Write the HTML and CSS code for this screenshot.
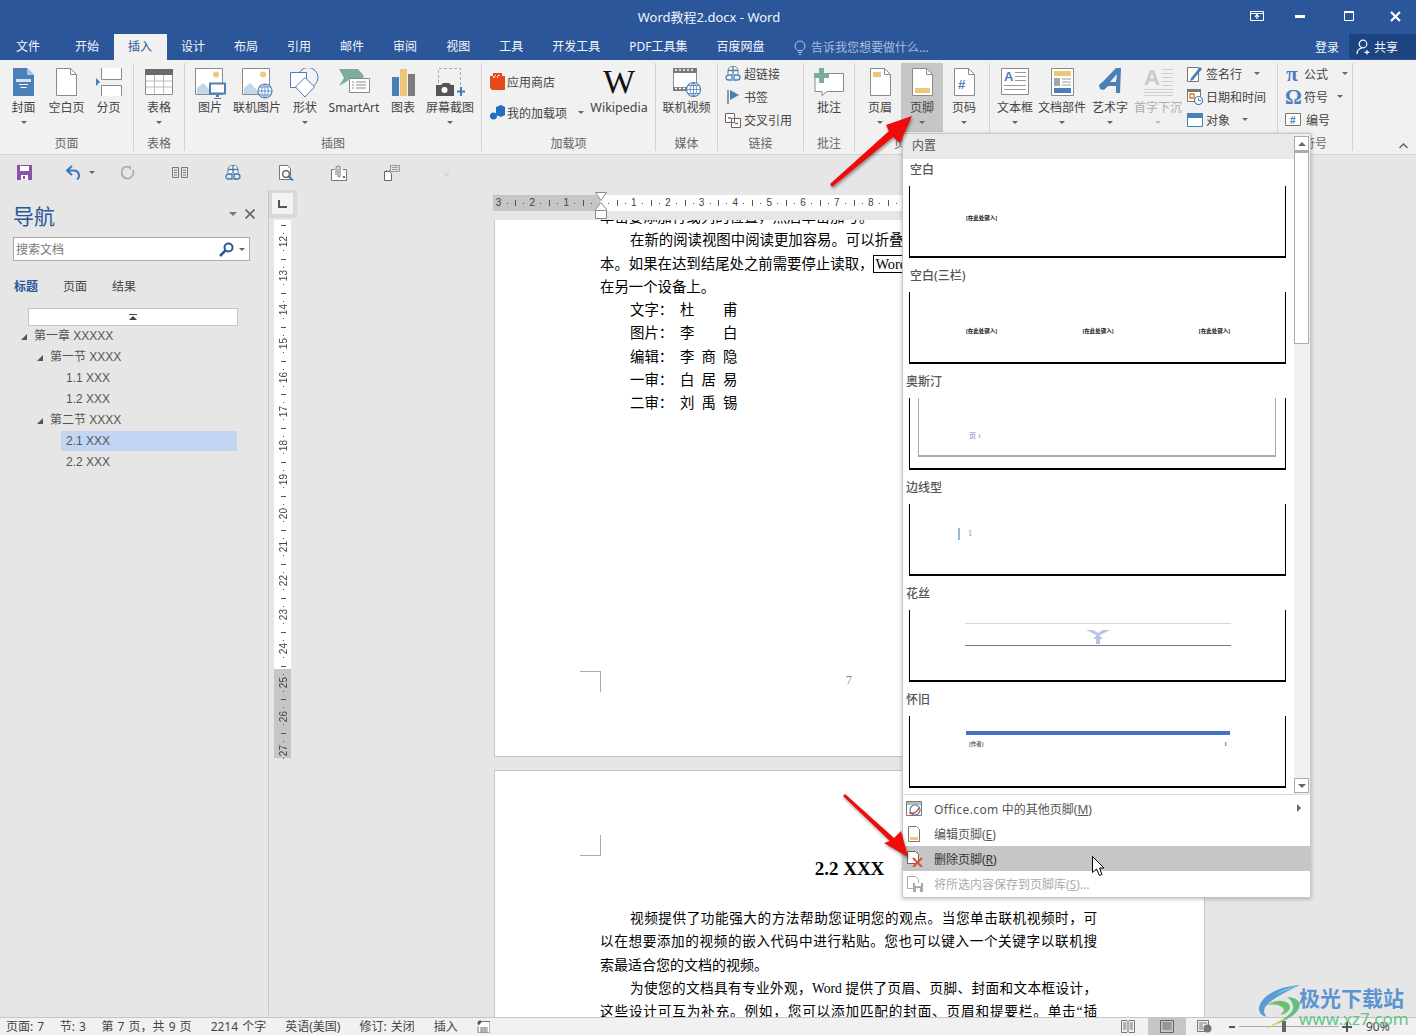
FILE: index.html
```html
<!DOCTYPE html>
<html lang="zh-CN">
<head>
<meta charset="utf-8">
<title>Word教程2.docx - Word</title>
<link rel="stylesheet" href="styles.css">
</head>
<body>
<div class="app">
  <header class="titlebar">
    <div class="title">Word教程2.docx - Word</div>
    <div class="winbtns">
      <svg class="wb" width="14" height="12" viewBox="0 0 14 12"><path d="M.5 1.5h13v9H.5zM.5 3.5h13" fill="none" stroke="#fff"/><path d="M7 9V5M5 7l2-2.500 2 2.500" fill="none" stroke="#fff" stroke-width="1.200"/></svg>
      <svg class="wb" width="10" height="3" viewBox="0 0 10 3"><path d="M0 0h10v3H0z" fill="#fff"/></svg>
      <svg class="wb" width="10" height="10" viewBox="0 0 10 10"><path d="M.5 1.500h9v8h-9z" fill="none" stroke="#fff"/><path d="M0 0h10v2H0z" fill="#fff"/></svg>
      <svg class="wb" width="11" height="11" viewBox="0 0 11 11"><path d="M1 1l9 9M10 1l-9 9" stroke="#fff" stroke-width="2.200"/></svg>
    </div>
  </header>
  <nav class="tabs">
    <span class="tab tab-file">文件</span>
    <span class="tab">开始</span>
    <span class="tab tab-on">插入</span>
    <span class="tab">设计</span>
    <span class="tab">布局</span>
    <span class="tab">引用</span>
    <span class="tab">邮件</span>
    <span class="tab">审阅</span>
    <span class="tab">视图</span>
    <span class="tab">工具</span>
    <span class="tab">开发工具</span>
    <span class="tab">PDF工具集</span>
    <span class="tab">百度网盘</span>
    <span class="tell">
      <svg width="12" height="15" viewBox="0 0 12 15"><path d="M3.500 10.500C2 9 1 7.800 1 6a5 5 0 0 1 10 0c0 1.800-1 3-2.500 4.500zM4 12.500h4M5 14.500h2" fill="none" stroke="#b5c7e0"/></svg>
      告诉我您想要做什么...
    </span>
    <span class="login">登录</span>
    <span class="share">
      <svg width="16" height="16" viewBox="0 0 16 16"><circle cx="7" cy="5" r="3.800" fill="none" stroke="#fff" stroke-width="1.200"/><path d="M1 15c0-3.500 2.500-5.500 5-6M11 11v4.500M8.500 13.300h5" fill="none" stroke="#fff" stroke-width="1.200"/></svg>
      共享
    </span>
  </nav>

  <section class="ribbon">
    <div class="grp g1">
      <div class="gbody">
        <div class="lg w43"><svg class="ic" width="21" height="28" viewBox="0 0 21 28"><path d="M0 0h14l7 7v21H0z" fill="#4a80b8"/><path d="M14 0l7 7h-7z" fill="#a9c4e0"/><path d="M3 11h15v3H3z" fill="#d7e3f0"/><path d="M6 16.500h9M7.500 19.500h6" stroke="#fff"/></svg><span class="lb">封面</span><i class="caret"></i></div>
        <div class="lg w43"><svg class="ic" width="21" height="28" viewBox="0 0 21 28"><path d="M.5.500h14l6 6v21H.5z" fill="#fff" stroke="#8a8a8a"/><path d="M14.500.5v6h6" fill="none" stroke="#8a8a8a"/></svg><span class="lb">空白页</span></div>
        <div class="lg w41"><svg class="ic" width="26" height="28" viewBox="0 0 26 28"><path d="M5.500 0v11.500h20V0M5.500 28V17.500h20V28" fill="#fff" stroke="#8a8a8a"/><path d="M0 10l4 4-4 4z" fill="#4a80b8"/></svg><span class="lb">分页</span></div>
      </div>
      <div class="glabel">页面</div>
    </div>
    <div class="grp g2">
      <div class="gbody">
        <div class="lg w50"><svg class="ic ic-d1" width="28" height="26" viewBox="0 0 28 26"><path d="M.5.500h27v25H.500z" fill="#fff" stroke="#8a8a8a"/><path d="M0 0h28v6H0z" fill="#6a6a6a"/><path d="M1 12h26M1 18h26M9.500 6v19M18.500 6v19" stroke="#bdbdbd"/></svg><span class="lb">表格</span><i class="caret"></i></div>
      </div>
      <div class="glabel">表格</div>
    </div>
    <div class="grp g3">
      <div class="gbody">
        <div class="lg w44"><svg class="ic" width="31" height="32" viewBox="0 0 31 32"><path d="M.5.500h27v26H.500z" fill="#fff" stroke="#8a8a8a"/><circle cx="21" cy="6.500" r="3" fill="#f0c878"/><path d="M2 26V20l6-5 6 6 3 5z" fill="#c5d6ea"/><path d="M14 14.500h17v12H14z" fill="#4a80b8"/><path d="M16 16.500h13v8H16z" fill="#fff"/><path d="M21 27h3v2h-3zM19 30h7v1h-7z" fill="#4a80b8"/></svg><span class="lb">图片</span></div>
        <div class="lg w50"><svg class="ic" width="31" height="31" viewBox="0 0 31 31"><path d="M.5.500h27v26H.500z" fill="#fff" stroke="#8a8a8a"/><circle cx="21" cy="6.500" r="3" fill="#f0c878"/><path d="M2 26V20l6-5 6 6 3 5z" fill="#c5d6ea"/><circle cx="23" cy="23" r="7" fill="#fff" stroke="#4a80b8" stroke-width="1.200"/><path d="M16 23h14M23 16v14M17.500 19h11M17.500 27h11M23 16c-4.500 4-4.500 10 0 14M23 16c4.500 4 4.500 10 0 14" fill="none" stroke="#4a80b8" stroke-width=".8"/></svg><span class="lb">联机图片</span></div>
        <div class="lg w46"><svg class="ic" width="30" height="30" viewBox="0 0 30 30"><circle cx="18" cy="9.500" r="10" fill="none" stroke="#4a80b8"/><path d="M.5 4.500h16v15H.500z" fill="#fff" stroke="#4a80b8"/><path d="M15 9.500l9.500 9.500-9.500 10-9.500-10z" fill="#fff" stroke="#4a80b8"/></svg><span class="lb">形状</span><i class="caret"></i></div>
        <div class="lg w52"><svg class="ic ic-d1" width="31" height="26" viewBox="0 0 31 26"><path d="M0 0h19l6 7-2 3H9L10 11 0 17l5-8z" fill="#7aad9c"/><path d="M10.500 9.500h20v14h-20z" fill="#fff" stroke="#8a8a8a"/><path d="M13 13h2M13 16h2M13 19h2M17 13h10M17 16h10M17 19h10" stroke="#8a8a8a"/></svg><span class="lb">SmartArt</span></div>
        <div class="lg w46"><svg class="ic ic-d1" width="23" height="27" viewBox="0 0 23 27"><path d="M0 8h7v19H0z" fill="#4a80b8"/><path d="M8 0h7v27H8z" fill="#eec67a"/><path d="M16 5h7v22h-7z" fill="#7d7d7d"/></svg><span class="lb">图表</span></div>
        <div class="lg w48"><svg class="ic" width="29" height="28" viewBox="0 0 29 28"><path d="M2.500 15V.5h22v20" fill="none" stroke="#a9a9a9" stroke-dasharray="3 2"/><path d="M0 17h5l2-2h6l2 2h3v11H0z" fill="#555"/><circle cx="8.500" cy="22" r="3" fill="#fff"/><path d="M25 19v9M21 23.500h8" stroke="#3f7fbf" stroke-width="2"/></svg><span class="lb">屏幕截图</span><i class="caret"></i></div>
      </div>
      <div class="glabel">插图</div>
    </div>
    <div class="grp g4">
      <div class="gbody addins">
        <div class="addcol">
          <div class="sm tall"><svg width="15" height="17" viewBox="0 0 15 17"><path d="M0 3h15v14H2L0 15z" fill="#e8491b"/><path d="M3 0h9v5h-2V2H8v3H6V2H5v3H3z" fill="#e8491b"/><path d="M3 3h2v2H3zM7 3h1v2H7z" fill="#fff" opacity=".7"/></svg><span>应用商店</span></div>
          <div class="sm tall"><svg width="15" height="15" viewBox="0 0 15 15"><path d="M6 2l5-2 4 2v8l-4 2-5-2z" fill="#1f70c1"/><circle cx="3.500" cy="11" r="3.500" fill="#1f70c1"/></svg><span>我的加载项</span><i class="caret inl"></i></div>
        </div>
        <div class="lg w58"><span class="wlogo">W</span><span class="lb wikilb">Wikipedia</span></div>
      </div>
      <div class="glabel">加载项</div>
    </div>
    <div class="grp g5">
      <div class="gbody">
        <div class="lg w61"><svg class="ic" width="28" height="29" viewBox="0 0 28 29"><path d="M.5.500h23v22H.5z" fill="#fff" stroke="#8a8a8a"/><path d="M0 0h24v5H0zM0 19h24v4H0z" fill="#7a7a7a"/><path d="M2 2h2M6 2h2M10 2h2M14 2h2M18 2h2M2 20.500h2M6 20.500h2M10 20.500h2" stroke="#fff" stroke-width="1.500"/><circle cx="20.500" cy="21.500" r="7" fill="#fff" stroke="#4a80b8" stroke-width="1.200"/><path d="M13.500 21.500h14M20.500 14.500v14M15 17.500h11M15 25.500h11M20.500 14.500c-4.500 4-4.500 10 0 14M20.500 14.500c4.500 4 4.500 10 0 14" fill="none" stroke="#4a80b8" stroke-width=".8"/></svg><span class="lb">联机视频</span></div>
      </div>
      <div class="glabel">媒体</div>
    </div>
    <div class="grp g6">
      <div class="gbody smcol">
        <div class="sm"><svg width="16" height="16" viewBox="0 0 16 16"><path d="M3 8V5a5 5 0 0 1 10 0v3" fill="#fff" stroke="#777"/><path d="M3 4.500h10M8 0v8M1 11.500a2.500 2.500 0 0 1 2.500-2.500H7v5H3.500A2.500 2.500 0 0 1 1 11.500zM15 11.500A2.500 2.500 0 0 0 12.500 9H9v5h3.500a2.500 2.500 0 0 0 2.500-2.500z" fill="none" stroke="#4a80b8" stroke-width="1.300"/></svg><span>超链接</span></div>
        <div class="sm"><svg width="16" height="16" viewBox="0 0 16 16"><path d="M3 1v14" stroke="#777" stroke-width="1.500"/><path d="M5 1l9 5-9 5z" fill="#4a80b8"/></svg><span>书签</span></div>
        <div class="sm"><svg width="16" height="16" viewBox="0 0 16 16"><path d="M.5 1.500h9v9h-9zM6.500 6.500h9v9h-9z" fill="#fff" stroke="#666"/><path d="M3 6h3M10 11.500h3" stroke="#d9512c" stroke-width="1.500"/></svg><span>交叉引用</span></div>
      </div>
      <div class="glabel">链接</div>
    </div>
    <div class="grp g7">
      <div class="gbody">
        <div class="lg w50"><svg class="ic" width="30" height="28" viewBox="0 0 30 28"><path d="M4.500 5.500h25v18H13l-5 4v-4H1V9z" fill="#fff" stroke="#8a8a8a"/><path d="M5 0h5v5h5v5h-5v5H5v-5H0V5h5z" fill="#7aad9c"/></svg><span class="lb">批注</span></div>
      </div>
      <div class="glabel">批注</div>
    </div>
    <div class="grp g8">
      <div class="gbody">
        <div class="lg w42"><svg class="ic" width="21" height="28" viewBox="0 0 21 28"><path d="M.5.500h14l6 6v21H.5z" fill="#fff" stroke="#8a8a8a"/><path d="M14.500.5v6h6" fill="none" stroke="#8a8a8a"/><path d="M3 4h8v5H3z" fill="#eec67a"/></svg><span class="lb">页眉</span><i class="caret"></i></div>
        <div class="lg w42 lg-on"><svg class="ic" width="21" height="28" viewBox="0 0 21 28"><path d="M.5.500h14l6 6v21H.5z" fill="#fff" stroke="#8a8a8a"/><path d="M14.500.5v6h6" fill="none" stroke="#8a8a8a"/><path d="M3 20h15v5H3z" fill="#eec67a"/></svg><span class="lb">页脚</span><i class="caret"></i></div>
        <div class="lg w42"><svg class="ic" width="21" height="28" viewBox="0 0 21 28"><path d="M.5.500h14l6 6v21H.5z" fill="#fff" stroke="#8a8a8a"/><path d="M14.500.5v6h6" fill="none" stroke="#8a8a8a"/><text x="4" y="21" class="hash">#</text></svg><span class="lb">页码</span><i class="caret"></i></div>
      </div>
      <div class="glabel">页眉和页脚</div>
    </div>
    <div class="grp g9">
      <div class="gbody">
        <div class="lg w46"><svg class="ic" width="28" height="27" viewBox="0 0 28 27"><path d="M.5.500h27v26H.5z" fill="#fff" stroke="#8a8a8a"/><text x="3" y="13" class="aicon">A</text><path d="M14 4.500h11M14 8.500h11M14 12.500h11M3 17.500h22M3 21.500h22" stroke="#9a9a9a"/></svg><span class="lb">文本框</span><i class="caret"></i></div>
        <div class="lg w48"><svg class="ic" width="23" height="28" viewBox="0 0 23 28"><path d="M.5.500h22v27H.5z" fill="#fff" stroke="#8a8a8a"/><path d="M3 3h17v5H3z" fill="#eec67a"/><path d="M3 10h6v8H3z" fill="#a6a6a6"/><path d="M11 11h9M11 14h9M11 17h9" stroke="#9a9a9a"/><path d="M3 20h17v5H3z" fill="#4a80b8"/></svg><span class="lb">文档部件</span><i class="caret"></i></div>
        <div class="lg w48"><svg class="ic" width="22" height="26" viewBox="0 0 22 26"><path d="M0 17C6 12 12 5 17 0h5l-1 25h-4l0-7H9l-4 4-4-1zM11 14h6l1-8z" fill="#4a80b8" fill-rule="evenodd"/></svg><span class="lb">艺术字</span><i class="caret"></i></div>
        <div class="lg w47 off"><svg class="ic" width="29" height="29" viewBox="0 0 29 29"><text x="0" y="17" class="aicon2">A</text><path d="M18 1.500h11M18 5.500h11M18 9.500h11M18 13.500h11M18 17.500h11M0 21.500h29M0 24.500h29M0 27.500h29" stroke="#cfcfcf"/></svg><span class="lb">首字下沉</span><i class="caret"></i></div>
        <div class="smcol c-sign">
          <div class="sm"><svg width="16" height="16" viewBox="0 0 16 16"><path d="M.5 1.500h11v14H.5z" fill="#fff" stroke="#777"/><path d="M4 12L13 1l2 2-9 11-3 1z" fill="#4a80b8"/></svg><span>签名行</span><i class="caret inl"></i></div>
          <div class="sm"><svg width="16" height="16" viewBox="0 0 16 16"><path d="M.5.500h13v12H.5z" fill="#fff" stroke="#777"/><path d="M0 0h14v3H0z" fill="#777"/><path d="M3 5h4v4H3z" fill="none" stroke="#e0761c" stroke-width="1.300"/><circle cx="11.500" cy="11.500" r="4" fill="#fff" stroke="#4a80b8" stroke-width="1.200"/><path d="M11.500 9v2.500H14" fill="none" stroke="#4a80b8"/></svg><span>日期和时间</span></div>
          <div class="sm"><svg width="16" height="16" viewBox="0 0 16 16"><path d="M.5 1.500h15v13H.5z" fill="#fff" stroke="#4a80b8"/><path d="M0 1h16v5H0z" fill="#4a80b8"/></svg><span>对象</span><i class="caret inl"></i></div>
        </div>
      </div>
      <div class="glabel">文本</div>
    </div>
    <div class="grp g10">
      <div class="gbody smcol c-sym">
        <div class="sm"><span class="sym">π</span><span>公式</span><i class="caret inl"></i></div>
        <div class="sm"><span class="sym">Ω</span><span>符号</span><i class="caret inl tight"></i></div>
        <div class="sm"><svg width="16" height="14" viewBox="0 0 16 14"><path d="M.5.500h15v12H.5z" fill="#fff" stroke="#777"/><text x="5" y="10.500" class="hash2">#</text></svg><span>编号</span></div>
      </div>
      <div class="glabel">符号</div>
    </div>
    <svg class="collapse" width="9" height="6" viewBox="0 0 9 6"><path d="M.5 5L4.500 1l4 4" fill="none" stroke="#666" stroke-width="1.500"/></svg>
  </section>

  <div class="qat">
    <svg width="15" height="15" viewBox="0 0 15 15"><path d="M0 0h15v15H0z" fill="#8a52a8"/><path d="M3 1h9v5H3z" fill="#fff"/><path d="M4 10h7v5H4z" fill="#fff"/><path d="M6 11h2v3H6z" fill="#8a52a8"/></svg>
    <svg class="q-undo" width="15" height="15" viewBox="0 0 15 15"><path d="M6 1L1 5.500 6 10" fill="none" stroke="#3f78b5" stroke-width="2"/><path d="M2 5.500h6a5 5 0 0 1 3 9" fill="none" stroke="#3f78b5" stroke-width="2"/></svg>
    <i class="caret q-caret"></i>
    <svg class="q-redo" width="14" height="14" viewBox="0 0 14 14"><path d="M9 1a6 6 0 1 0 3 3" fill="none" stroke="#b0b0b0" stroke-width="2"/><path d="M6.500 0h3.500v4.500z" fill="#b0b0b0"/></svg>
    <svg class="q-col" width="16" height="11" viewBox="0 0 16 11"><path d="M.5.500h6v10h-6zM9.500.5h6v10h-6zM2 3h3M2 5.500h3M2 8h3M11 3h3M11 5.500h3M11 8h3" fill="none" stroke="#777"/></svg>
    <svg class="q-web" width="16" height="16" viewBox="0 0 16 16"><path d="M3 8V5a5 5 0 0 1 10 0v3" fill="#fff" stroke="#777"/><path d="M3 4.500h10M8 0v8M1 11.500a2.500 2.500 0 0 1 2.500-2.500H7v5H3.500A2.500 2.500 0 0 1 1 11.500zM15 11.500A2.500 2.500 0 0 0 12.500 9H9v5h3.500a2.500 2.500 0 0 0 2.500-2.500z" fill="none" stroke="#3f78b5" stroke-width="1.300"/></svg>
    <svg class="q-find" width="15" height="16" viewBox="0 0 15 16"><path d="M.5.500h8l3 3v11H.5z" fill="#fff" stroke="#777"/><circle cx="7" cy="9" r="3.300" fill="#fff" stroke="#555" stroke-width="1.200"/><path d="M9.500 11.500L14 15.500" stroke="#3f78b5" stroke-width="1.800"/></svg>
    <svg class="q-clip" width="16" height="16" viewBox="0 0 16 16"><path d="M.5 4.500h3M12 4.500h3.500v11H.5v-11" fill="#fff" stroke="#777"/><path d="M5 10V3a2 2 0 0 1 4 0v8a1 1 0 0 1-2 0V4" fill="none" stroke="#777"/><path d="M12 11h2v2h-2z" fill="#3f78b5"/></svg>
    <svg class="q-doc" width="16" height="16" viewBox="0 0 16 16"><path d="M.5 6.500h5l2 2v7h-7z" fill="#fff" stroke="#666"/><path d="M6.500.5h9v6h-9zM8 2.500h6M8 4.500h6" fill="none" stroke="#999"/><path d="M6 5L4 7 2 5" fill="none" stroke="#3f78b5"/></svg>
    <svg class="q-more" width="7" height="8" viewBox="0 0 7 8"><path d="M0 1h7M0 3h7M1 5l2.500 3L6 5z" fill="#d0d0d0" stroke="#d0d0d0" stroke-width=".5"/></svg>
  </div>

  <main class="work">
    <aside class="nav">
      <div class="nav-head">
        <span class="nav-title">导航</span>
        <i class="caret nav-caret"></i>
        <svg width="10" height="10" viewBox="0 0 10 10"><path d="M.5.500l9 9M9.500.5l-9 9" stroke="#666" stroke-width="1.600"/></svg>
      </div>
      <div class="search">
        <span class="search-t">搜索文档</span>
        <svg width="15" height="15" viewBox="0 0 15 15"><circle cx="9.500" cy="5.500" r="4" fill="none" stroke="#2b579a" stroke-width="2"/><path d="M6.500 8.500L1 14" stroke="#2b579a" stroke-width="2.500"/></svg>
        <i class="caret search-caret"></i>
      </div>
      <div class="nav-tabs">
        <span class="nt nt-on">标题</span><span class="nt">页面</span><span class="nt">结果</span>
      </div>
      <div class="upbtn"><svg width="8" height="7" viewBox="0 0 8 7"><path d="M0 0h8v1H0zM4 2l4 4H0z" fill="#444"/></svg></div>
      <ul class="tree">
        <li class="l1"><i class="tri"></i>第一章 XXXXX</li>
        <li class="l2"><i class="tri"></i>第一节 XXXX</li>
        <li class="l3">1.1 XXX</li>
        <li class="l3">1.2 XXX</li>
        <li class="l2"><i class="tri"></i>第二节 XXXX</li>
        <li class="l3 sel">2.1 XXX</li>
        <li class="l3">2.2 XXX</li>
      </ul>
    </aside>

    <div class="vcol">
      <div class="corner"><span class="corner-in"><svg width="9" height="8" viewBox="0 0 9 8"><path d="M1 0v7h8" fill="none" stroke="#555" stroke-width="2"/></svg></span></div>
      <div class="vruler">
        <span class="vc"><b>12</b></span><span class="vc"><b>13</b></span><span class="vc"><b>14</b></span><span class="vc"><b>15</b></span><span class="vc"><b>16</b></span><span class="vc"><b>17</b></span><span class="vc"><b>18</b></span><span class="vc"><b>19</b></span><span class="vc"><b>20</b></span><span class="vc"><b>21</b></span><span class="vc"><b>22</b></span><span class="vc"><b>23</b></span><span class="vc"><b>24</b></span><span class="vc"><b>25</b></span><span class="vc"><b>26</b></span><span class="vc"><b>27</b></span>
      </div>
    </div>

    <div class="doc">
      <div class="hruler">
        <div class="hr-dark"><span class="hc">3</span><span class="hc">2</span><span class="hc">1</span><span class="hc hc-half"></span></div>
        <div class="hr-white"><span class="hc hc-half2"></span><span class="hc">1</span><span class="hc">2</span><span class="hc">3</span><span class="hc">4</span><span class="hc">5</span><span class="hc">6</span><span class="hc">7</span><span class="hc">8</span><span class="hc">9</span></div>
        <svg class="marker" width="12" height="28" viewBox="0 0 12 28"><path d="M.5.500h11L6 8.500z" fill="#fff" stroke="#8a8a8a"/><path d="M6 10.500l5.500 7v9H.5v-9z" fill="#fff" stroke="#8a8a8a"/><path d="M.5 18.500h11" stroke="#8a8a8a"/></svg>
      </div>
      <div class="pages">
        <article class="page page1">
          <div class="body-wrap">
            <p class="ln">单击要添加行或列的位置，然后单击加号。</p>
            <p class="ln ind">在新的阅读视图中阅读更加容易。可以折叠文档某些部分并关注所需文</p>
            <p class="ln">本。如果在达到结尾处之前需要停止读取，<span class="boxed">Word</span> 会记住您的停止位置 - 即使</p>
            <p class="ln">在另一个设备上。</p>
            <p class="ln ind"><span class="lk">文字：</span><span class="nm">杜</span><span class="nm2">甫</span></p>
            <p class="ln ind"><span class="lk">图片：</span><span class="nm">李</span><span class="nm2">白</span></p>
            <p class="ln ind"><span class="lk">编辑：</span><span class="nm3">李</span><span class="nm3">商</span><span class="nm3">隐</span></p>
            <p class="ln ind"><span class="lk">一审：</span><span class="nm3">白</span><span class="nm3">居</span><span class="nm3">易</span></p>
            <p class="ln ind"><span class="lk">二审：</span><span class="nm3">刘</span><span class="nm3">禹</span><span class="nm3">锡</span></p>
          </div>
          <div class="foot">
            <i class="crop crop-a"></i>
            <span class="pgno">7</span>
          </div>
        </article>
        <article class="page page2">
          <i class="crop crop-b"></i>
          <h2 class="h22">2.2 XXX</h2>
          <div class="body-wrap2">
            <p class="ln ind just">视频提供了功能强大的方法帮助您证明您的观点。当您单击联机视频时，可</p>
            <p class="ln just">以在想要添加的视频的嵌入代码中进行粘贴。您也可以键入一个关键字以联机搜</p>
            <p class="ln just-no">索最适合您的文档的视频。</p>
            <p class="ln ind just">为使您的文档具有专业外观，Word 提供了页眉、页脚、封面和文本框设计，</p>
            <p class="ln just">这些设计可互为补充。例如，您可以添加匹配的封面、页眉和提要栏。单击“插</p>
          </div>
        </article>
      </div>
    </div>
  </main>

  <footer class="status">
    <span class="st st-a">页面: 7</span><span class="st st-a">节: 3</span><span class="st">第 7 页，共 9 页</span><span class="st">2214 个字</span><span class="st">英语(美国)</span><span class="st">修订: 关闭</span><span class="st">插入</span>
    <svg width="13" height="13" viewBox="0 0 13 13"><circle cx="3" cy="3" r="2.500" fill="#555"/><path d="M5 1.500h8V13H1V6.500" fill="#fff" stroke="#777"/><path d="M3 8h8M3 10h8M3 12h8M5 7v6M8 7v6" stroke="#888"/></svg>
    <div class="st-right">
      <svg class="v-read" width="14" height="13" viewBox="0 0 14 13"><path d="M.5.500h5.500L7 1.500 8 .5h5.500v12H8L7 11.500 6 12.500H.5zM7 1.500v10M2 3h3.500M2 5h3.500M2 7h3.500M2 9h3.500M8.500 3H12M8.500 5H12M8.500 7H12M8.500 9H12" fill="none" stroke="#777"/></svg>
      <span class="v-print"><svg width="14" height="13" viewBox="0 0 14 13"><path d="M.5.500h13v12H.5zM2.500 3h9M2.500 5h9M2.500 7h9M2.500 9h9" fill="none" stroke="#666"/></svg></span>
      <svg class="v-web" width="15" height="13" viewBox="0 0 15 13"><path d="M.5.500h11v11H.5zM2 3h8M2 5h4M2 7h4M2 9h4" fill="none" stroke="#777"/><circle cx="10.500" cy="8.500" r="4" fill="#777"/></svg>
      <i class="zm-minus"></i>
      <span class="slider"><i class="thumb"></i></span>
      <svg class="zm-plus" width="10" height="10" viewBox="0 0 10 10"><path d="M5 0v10M0 5h10" stroke="#555" stroke-width="2"/></svg>
      <span class="zoomv">90%</span>
    </div>
  </footer>

  <div class="dd">
    <div class="dd-top">
      <div class="gal">
        <div class="gal-head">内置</div>
        <div class="h-a">空白</div>
        <div class="pv pv-1"><span class="tiny">[在此处键入]</span></div>
        <div class="h-a">空白(三栏)</div>
        <div class="pv pv-3"><span class="tiny">[在此处键入]</span><span class="tiny">[在此处键入]</span><span class="tiny">[在此处键入]</span></div>
        <div class="h-b">奥斯汀</div>
        <div class="pv pv-a"><div class="austin"><span class="tiny-b">页 1</span></div></div>
        <div class="h-b">边线型</div>
        <div class="pv pv-s"><i class="sbar"></i><span class="tiny-b">1</span></div>
        <div class="h-b">花丝</div>
        <div class="pv pv-f">
          <div class="fil">
            <svg width="24" height="14" viewBox="0 0 24 14"><path d="M0 0h7l5 3 5-3h7L14 5h-4z" fill="#b4c6e7"/><path d="M12 4l5 5h-3v5h-4V9H7z" fill="#b4c6e7"/></svg>
          </div>
        </div>
        <div class="h-b">怀旧</div>
        <div class="pv pv-r"><div class="rbar"></div><div class="rrow"><span>[作者]</span><span>1</span></div></div>
      </div>
      <div class="sb">
        <div class="sb-btn"><i class="up"></i></div>
        <div class="sb-thumb"></div>
        <div class="sb-fill"></div>
        <div class="sb-btn"><i class="down"></i></div>
      </div>
    </div>
    <div class="menu">
      <div class="mi"><svg width="17" height="16" viewBox="0 0 17 16"><path d="M.5.500h15v14H.5z" fill="#fff" stroke="#777"/><path d="M1 1h14v3H1z" fill="#bbb"/><circle cx="9" cy="9" r="5" fill="none" stroke="#4a80b8" stroke-width="1.200"/><path d="M3 12c4 1 8-1 10-5" fill="none" stroke="#d9512c" stroke-width="1.600"/></svg><span><span class="latin">Office.com</span> 中的其他页脚(<u>M</u>)</span><i class="mi-arrow"></i></div>
      <div class="mi"><svg width="17" height="16" viewBox="0 0 17 16"><path d="M2.500.5h8l3 3v12h-11z" fill="#fff" stroke="#777"/><path d="M4 11h8v3H4z" fill="#eec67a"/></svg><span>编辑页脚(<u>E</u>)</span></div>
      <div class="mi mi-on"><svg width="17" height="16" viewBox="0 0 17 16"><path d="M1.500.5h8l3 3v9h-11z" fill="#fff" stroke="#666"/><path d="M7 7l9 9M16 7l-9 9" stroke="#d9512c" stroke-width="2"/></svg><span>删除页脚(<u>R</u>)</span></div>
      <div class="mi mi-off"><svg width="17" height="16" viewBox="0 0 17 16"><path d="M1.500.5h8l3 3v9h-11z" fill="#fff" stroke="#aaa"/><path d="M7 7h10v9H7z" fill="#a9a9a9"/><path d="M9 7h6v3H9zM10 12h4v4h-4z" fill="#fff"/></svg><span>将所选内容保存到页脚库(<u>S</u>)...</span></div>
    </div>
  </div>

  <div class="wm">
    <svg width="48" height="48" viewBox="0 0 48 48">
      <path d="M44 1C28 2 10 8 4 20c-3 7 1 12 7 13-4-4-4-9 1-13C19 13 32 7 44 1z" fill="#5b9bd5"/>
      <path d="M44 1C34 3 26 6 19 11c7-3 14-6 25-10z" fill="#7fd0ee"/>
      <path d="M12 21c6-6 18-5 21-1 3 5-2 10-9 11 4-3 5-6 2-8-4-3-10-3-14-2z" fill="#6cc070"/>
      <path d="M31 13c8 0 15 4 12 11-3 9-20 15-33 21 11-7 24-12 27-20 1-5-2-9-6-12z" fill="#62c07e"/>
      <path d="M10 45c7-5 13-8 20-11-6 4-12 8-20 11z" fill="#e8d85c"/>
    </svg>
    <div class="wm-t"><span class="wm-cn">极光下载站</span><span class="wm-en">www.xz7.com</span></div>
  </div>

  <svg class="overlay" width="1416" height="1035" viewBox="0 0 1416 1035">
    <g class="arrows">
      <polygon points="830,184 889,131 886,125 912,116 900,143 893,137 832,187"/>
      <polygon points="843,796 845,794 894,838 901,831 908,857 884,843 890,841"/>
    </g>
    <polygon class="cursor" points="1092.500,856.500 1092.500,872.500 1096.500,869 1099.500,875.500 1102,874.500 1099.500,868 1104,868"/>
  </svg>
</div>
</body>
</html>
```

FILE: styles.css
```css
* { box-sizing: border-box; }
html, body { margin: 0; padding: 0; }
body {
  width: 1416px;
  height: 1035px;
  overflow: hidden;
  font-family: "Noto Sans", "Noto Sans CJK SC", sans-serif;
  font-size: 12px;
  color: #444;
  background: #e6e6e6;
}
p, ul, h2 { margin: 0; padding: 0; }
i { display: block; font-style: normal; }
svg { display: block; flex: none; }

.app { position: relative; width: 1416px; height: 1035px; display: flex; flex-direction: column; overflow: hidden; }

/* title bar */
.titlebar { height: 34px; background: #2b579a; display: flex; align-items: center; justify-content: center; color: #fff; position: relative; padding-bottom: 2px; }
.title { font-size: 13px; margin-left: 2px; color: #f1f5fa; }
.winbtns { position: absolute; right: 0; top: 0; height: 32px; width: 166px; display: flex; align-items: center; }
.winbtns .wb:nth-child(2) { margin-left: 31px; }
.winbtns .wb:nth-child(3) { margin-left: 39px; }
.winbtns .wb:nth-child(4) { margin-left: 36px; }

/* tabs */
.tabs { height: 26px; background: #2b579a; display: flex; align-items: center; color: #f4f6fa; }
.tab { padding: 0 14.5px; line-height: 26px; height: 26px; }
.tab-file { margin: 0 6px 0 1.5px; }
.tab-on { background: #f1f1f1; color: #2b579a; }
.tell { display: flex; align-items: center; gap: 5px; margin-left: 15px; color: #a9bcd8; }
.login { margin-left: auto; margin-right: 10px; }
.share { width: 67px; height: 25px; background: #1b4480; display: flex; align-items: center; gap: 2px; padding-left: 7px; margin-top: -1px; }

/* ribbon */
.ribbon { position: relative; height: 95px; background: #f1f1f1; border-bottom: 1px solid #d2d2d2; display: flex; padding-top: 3px; flex: none; }
.grp { height: 88px; display: flex; flex-direction: column; border-right: 1px solid #d2d2d2; flex: none; }
.gbody { height: 74px; display: flex; }
.glabel { text-align: center; line-height: 14px; color: #666; height: 14px; }
.g1 { width: 134px; padding-left: 2px; }
.g2 { width: 51px; }
.g3 { width: 297px; padding-left: 3px; }
.g4 { width: 174px; }
.g5 { width: 62px; }
.g6 { width: 86px; }
.g7 { width: 51px; }
.g8 { width: 135px; padding-left: 4px; }
.g9 { width: 288px; padding-left: 2px; }
.g10 { width: 75px; }
.g1 .glabel { margin-left: -2px; }
.g3 .glabel { margin-left: -3px; }
.g9 .glabel { margin-left: -2px; }

.lg { display: grid; grid-template-rows: 32px 16px auto; justify-items: center; align-content: start; padding-top: 5px; height: 69px; flex: none; }
.ic-d1 { margin-top: 1px; }
.lb { line-height: 16px; white-space: nowrap; }
.w41 { width: 41px; } .w42 { width: 42px; } .w43 { width: 43px; } .w44 { width: 44px; }
.w46 { width: 46px; } .w47 { width: 47px; } .w48 { width: 48px; } .w50 { width: 50px; }
.w52 { width: 52px; } .w58 { width: 58px; } .w61 { width: 61px; }
.lg-on { background: #c6c6c6; }
.off { color: #aaa; }
.off .caret { border-top-color: #bbb; }
.caret { width: 0; height: 0; border: 3px solid transparent; border-top: 3px solid #666; border-bottom: 0; margin-top: 5px; }
.caret.inl { margin: 0 0 0 9px; }
.caret.tight { margin-left: 4px; }
.sm { height: 23px; display: flex; align-items: center; gap: 3px; white-space: nowrap; }
.sm svg { flex: none; }
.smcol { flex-direction: column; }
.smcol .sm:first-child { margin-top: -1px; }
.g6 .gbody { padding-left: 7px; }
.c-sign { display: flex; padding-left: 6px; }
.c-sym { padding-left: 7px; }
.c-sym .sm { gap: 5px; }
.sym { width: 14px; font-family: "Liberation Serif", serif; font-size: 21px; font-weight: bold; color: #4a80b8; line-height: 20px; text-align: center; }
.hash { font: bold 13px "Liberation Sans", sans-serif; fill: #4a80b8; }
.hash2 { font: bold 10px "Liberation Sans", sans-serif; fill: #4a80b8; }
.aicon { font: bold 13px "Liberation Sans", sans-serif; fill: #4a80b8; }
.aicon2 { font: bold 22px "Liberation Sans", sans-serif; fill: #c9c9c9; }
.addins { padding-left: 8px; }
.addcol { width: 100px; display: flex; flex-direction: column; padding-top: 3px; }
.addcol .sm { gap: 2px; }
.sm.tall { height: 31px; }
.wlogo { font: 34px/28px "Liberation Serif", serif; color: #111; height: 28px; }
.wikilb { font-size: 12.500px; }
.collapse { position: absolute; right: 8px; top: 83px; }

/* quick access */
.qat { height: 35px; display: flex; align-items: center; padding-left: 17px; flex: none; }
.q-undo { margin-left: 34px; }
.q-caret { margin: 0 0 0 8px; }
.q-redo { margin-left: 26px; }
.q-col { margin-left: 37px; }
.q-web { margin-left: 37px; }
.q-find { margin-left: 38px; }
.q-clip { margin-left: 37px; }
.q-doc { margin-left: 37px; }
.q-more { margin-left: 43px; }

/* main */
.work { flex: 1; display: flex; min-height: 0; }
.nav { width: 269px; margin-bottom: 2px; border-right: 1px solid #c6c6c6; padding-left: 13px; flex: none; }
.nav-head { height: 47px; display: flex; align-items: center; color: #2b579a; }
.nav-title { font-size: 21px; line-height: 28px; color: #2b579a; width: 216px; margin-top: 4px; }
.nav-caret { border-width: 4px 4.500px 0; border-top-color: #777; margin: 0 8px 0 0; width: 0; }
.search { width: 237px; height: 24px; background: #fff; border: 1px solid #ababab; display: flex; align-items: center; padding-left: 2px; }
.search-t { width: 203px; color: #777; }
.search-caret { margin: 0 0 0 5px; }
.nav-tabs { display: flex; margin-top: 17px; height: 18px; line-height: 18px; }
.nt { margin-left: 1px; width: 49px; white-space: nowrap; flex: none; margin-right: -1px; }
.nt-on { color: #2b579a; font-weight: bold; }
.upbtn { width: 210px; height: 18px; margin: 12px 0 0 15px; background: #fff; border: 1px solid #c6c6c6; display: flex; align-items: center; justify-content: center; }
.tree { list-style: none; margin: 0 0 0 -13px; width: 256px; color: #555; font-family: "Liberation Sans", "Noto Sans CJK SC", sans-serif; }
.tree li { height: 21px; line-height: 21px; display: flex; align-items: center; white-space: pre; }
.l1 { padding-left: 34px; }
.l2 { padding-left: 50px; }
.l3 { padding-left: 66px; }
.tree .sel { margin-left: 61px; width: 176px; padding-left: 5px; background: #c2d5f2; height: 20px; margin-bottom: 1px; }
.tri { width: 0; height: 0; border-style: solid; border-width: 0 0 6px 6px; border-color: transparent transparent #555 transparent; margin-right: 7px; margin-left: -13px; }

/* rulers */
.vcol { width: 28px; flex: none; }
.corner { width: 28px; height: 28px; background: #d9d9d9; padding: 3px 4px 4px 3px; }
.corner-in { display: flex; width: 21px; height: 21px; background: #f3f3f3; align-items: center; justify-content: center; }
.vruler { margin: 2px 0 0 5px; width: 17px; height: 538px; padding-top: 5px; background: linear-gradient(#fff 449px, #c6c6c6 449px); }
.vc {
  display: flex; height: 33.900px; align-items: center; justify-content: center; padding-left: 3px;
  background:
    linear-gradient(#555, #555) 7px 0 / 5px 1px no-repeat,
    linear-gradient(#555, #555) 9px 8px / 1px 1px no-repeat,
    linear-gradient(#555, #555) 9px 25px / 1px 1px no-repeat;
}
.vc b { font: 10px/10px "Liberation Sans", sans-serif; writing-mode: vertical-rl; transform: rotate(180deg); color: #444; }

.doc { flex: 1; padding: 5px 0 0 196px; min-width: 0; }
.hruler { position: relative; display: flex; height: 16px; width: 711px; font: 10px/16px "Liberation Sans", sans-serif; color: #444; }
.hr-dark { width: 107px; background: #c6c6c6; display: flex; justify-content: flex-end; overflow: hidden; }
.hr-white { width: 604px; background: #fff; display: flex; overflow: hidden; }
.hc {
  width: 33.850px; flex: none; text-align: center;
  background:
    linear-gradient(#555, #555) 0 5px / 1px 6px no-repeat,
    linear-gradient(#555, #555) 8px 8px / 1px 1px no-repeat,
    linear-gradient(#555, #555) 25px 8px / 1px 1px no-repeat;
}
.hc-half { width: 16.900px; }
.hc-half2 { width: 16.900px; background: linear-gradient(#555, #555) 8px 8px / 1px 1px no-repeat; }
.marker { position: absolute; left: 102px; top: -3px; }

.pages { width: 711px; margin: 9px 0 0 1px; height: 797px; overflow: hidden; }
.page { background: #fff; border: 1px solid #c6c6c6; width: 711px; }
.page1 { border-top: 0; height: 537px; margin-bottom: 13px; display: flex; flex-direction: column; overflow: hidden; }
.page2 { height: 300px; border-bottom: 0; padding-top: 64px; overflow: hidden; }
.body-wrap { margin: -14px 0 0 105px; width: 497px; flex: none; }
.body-wrap2 { margin: 25px 0 0 105px; width: 497px; }
.ln { font: 14.400px/23.300px "Liberation Serif", "Noto Sans CJK SC", serif; color: #000; height: 23.300px; white-space: nowrap; }
.ind { padding-left: 30px; }
.just { font-size: 13.600px; text-align: justify; text-align-last: justify; white-space: normal; }
.just-no { font-size: 14px; }
.boxed { border: 1px solid #000; padding: 0 1px; }
.lk { display: inline-block; width: 50px; }
.nm { display: inline-block; width: 43px; }
.nm2 { display: inline-block; }
.nm3 { display: inline-block; width: 21.500px; }
.foot { margin-top: auto; height: 85px; display: flex; padding-left: 85px; flex: none; }
.crop { width: 21px; height: 21px; flex: none; }
.crop-a { border-top: 1px solid #aaa; border-right: 1px solid #aaa; }
.crop-b { border-bottom: 1px solid #aaa; border-right: 1px solid #aaa; margin-left: 85px; height: 21px; }
.pgno { font: 12px/18px "Liberation Serif", serif; color: #888; margin: 0 0 0 245px; }
.h22 { font: bold 19px/26px "Liberation Serif", serif; color: #000; text-align: center; width: 709px; }

/* status bar */
.status { height: 18px; background: #f1f1f1; border-top: 1px solid #c6c6c6; display: flex; align-items: center; padding-left: 6px; flex: none; line-height: 17px; }
.st { margin-right: 19px; white-space: nowrap; word-spacing: 1px; }
.st-a { margin-right: 15.500px; }
.st-right { margin-left: auto; display: flex; align-items: center; height: 17px; padding-right: 25px; }
.v-print { width: 38px; height: 17px; background: #c6c6c6; display: flex; align-items: center; justify-content: center; margin-left: 13px; }
.v-web { margin-left: 11px; }
.zm-minus { width: 6px; height: 2px; background: #555; margin-left: 17px; }
.slider { display: block; position: relative; width: 100px; height: 1px; background: #aaa; margin-left: 4px; }
.thumb { position: absolute; left: 43px; top: -5px; width: 4px; height: 11px; background: #666; }
.zm-plus { margin-left: 3px; }
.zoomv { margin-left: 14px; width: 25px; }

/* dropdown */
.dd { position: absolute; left: 902px; top: 133px; width: 409px; height: 765px; background: #fff; border: 1px solid #c6c6c6; box-shadow: 0 1px 4px rgba(0,0,0,.25); display: flex; flex-direction: column; }
.dd-top { height: 661px; display: flex; border-bottom: 1px solid #dcdcdc; flex: none; }
.gal { width: 391px; flex: none; color: #555; }
.gal-head { height: 25px; line-height: 24px; background: #e9e9e9; padding-left: 9px; }
.h-a, .h-b { height: 22px; line-height: 22px; margin-bottom: 5px; font-weight: 500; white-space: nowrap; }
.h-a { padding-left: 7px; }
.h-b { padding-left: 3px; }
.pv { width: 377px; height: 72px; margin: 0 0 7px 6px; border: solid #000; border-width: 0 1px 2px 1px; display: flex; }
.tiny { font: bold 5.500px/6px "Liberation Serif", "Noto Sans CJK SC", serif; color: #111; white-space: nowrap; }
.tiny-b { font: 7px/8px "Liberation Serif", "Noto Sans CJK SC", serif; color: #7a8ab0; white-space: nowrap; }
.pv-1 { padding: 29px 0 0 56px; }
.pv-3 { padding: 36px 55px 0 56px; justify-content: space-between; }
.austin { width: 358px; height: 59px; margin-left: 8px; border: solid #aaa; border-width: 0 1px 2px; padding: 34px 0 0 50px; line-height: 8px; display: flex; }
.pv-s { padding: 24px 0 0 48px; }
.sbar { width: 2px; height: 12px; background: #9fb5dc; margin-right: 8px; }
.pv-s .tiny-b { line-height: 12px; font-size: 8px; }
.pv-f { padding: 13px 0 0 55px; }
.fil { width: 266px; height: 23px; border-top: 1px solid #cdd7ea; border-bottom: 1px solid #777; display: flex; justify-content: center; padding-top: 6px; }
.pv-r { flex-direction: column; padding: 15px 0 0 56px; }
.rbar { width: 264px; height: 4px; background: #4472c4; }
.rrow { width: 264px; display: flex; justify-content: space-between; padding: 6px 3px 0; font: bold 5.500px/6px "Liberation Serif", "Noto Sans CJK SC", serif; color: #666; }
.sb { width: 16px; background: #f1f1f1; padding-top: 2px; display: flex; flex-direction: column; align-items: flex-start; height: 660px; }
.sb-btn { width: 15px; height: 15px; background: #fff; border: 1px solid #ababab; display: flex; align-items: center; justify-content: center; flex: none; }
.sb-thumb { width: 15px; height: 193px; background: #fff; border: 1px solid #ababab; border-top-width: 2px; flex: none; }
.sb-fill { height: 434px; flex: none; }
.up { width: 0; height: 0; border: 4px solid transparent; border-bottom: 4px solid #666; border-top: 0; }
.down { width: 0; height: 0; border: 4px solid transparent; border-top: 4px solid #666; border-bottom: 0; }
.menu { padding-top: 1px; }
.mi { height: 25px; display: flex; align-items: center; padding-left: 3px; position: relative; color: #555; }
.mi > span { margin-left: 11px; white-space: nowrap; }
.mi u { text-underline-offset: 1px; }
.latin { letter-spacing: .4px; }
.mi-on { background: #c6c6c6; color: #333; }
.mi-off { color: #aaa; }
.mi-arrow { width: 0; height: 0; border-style: solid; border-width: 4px 0 4px 4px; border-color: transparent transparent transparent #666; position: absolute; right: 9px; top: 8px; }

/* watermark */
.wm { position: absolute; left: 1256px; top: 984px; display: flex; }
.wm-t { display: flex; flex-direction: column; margin: 1px 0 0 -5px; }
.wm-cn { font: bold 21px/24px "Noto Sans CJK SC", sans-serif; color: #5b94d0; white-space: nowrap; }
.wm-en { font: 17px/20px "Noto Sans", sans-serif; color: #62c486; white-space: nowrap; }

/* overlay */
.overlay { position: absolute; left: 0; top: 0; pointer-events: none; }
.arrows { fill: #f00a0a; filter: drop-shadow(1px 2px 1.500px rgba(0,0,0,.4)); }
.cursor { fill: #fff; stroke: #000; stroke-width: 1; }
```
